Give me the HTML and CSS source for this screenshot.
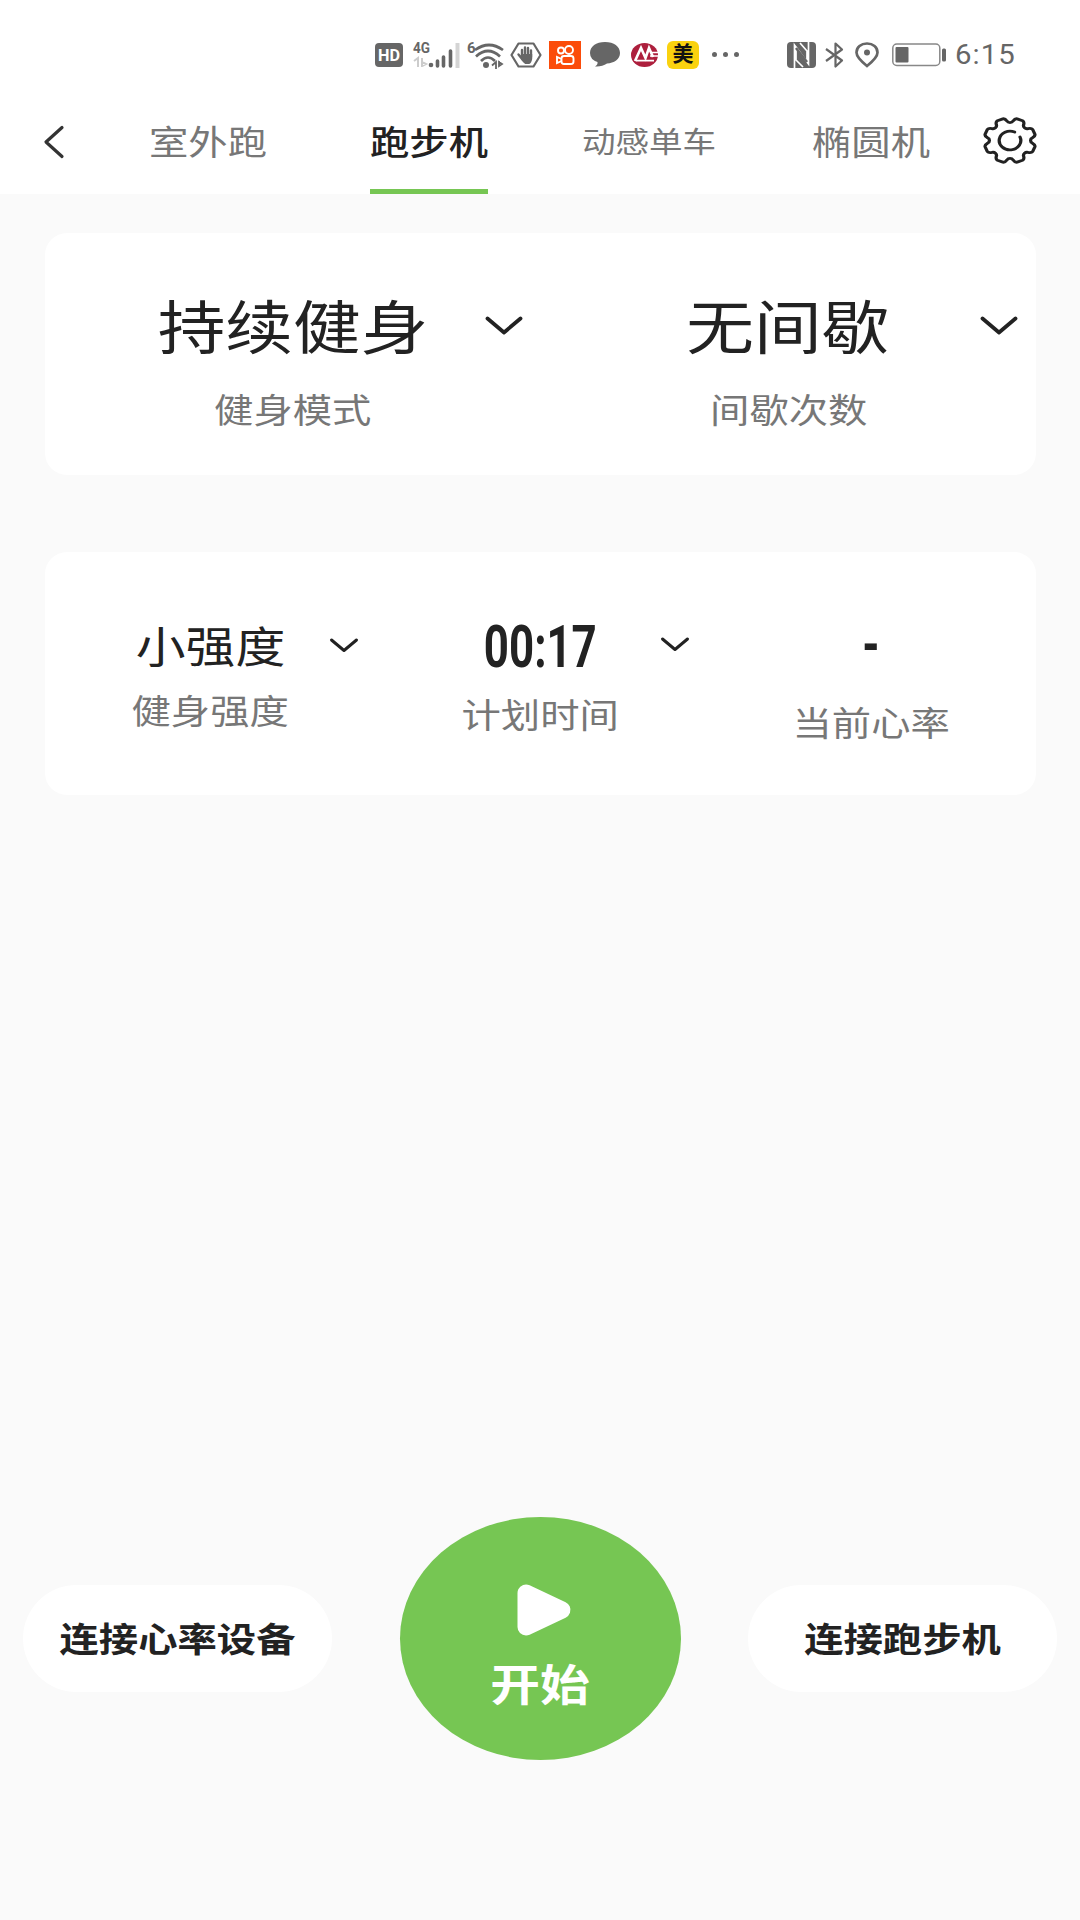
FILE: index.html
```html
<!DOCTYPE html>
<html lang="zh-CN">
<head>
    <meta charset="UTF-8">
    <title>跑步机</title>
    <link rel="stylesheet" href="styles.css">
</head>
<body>
<div class="header">
    <div class="status">
        <svg class="hd" width="28" height="24" viewBox="0 0 28 24">
            <rect width="28" height="24" rx="4" fill="#666"/>
            <text x="3" y="18" font-size="16" font-weight="700" textLength="22" lengthAdjust="spacingAndGlyphs" fill="#fff">HD</text>
        </svg>
        <svg class="signal" width="47" height="28" viewBox="0 0 47 28">
            <text x="0" y="12" font-size="15" font-weight="700" textLength="17" lengthAdjust="spacingAndGlyphs" fill="#666">4G</text>
            <path d="M1 20l4-3v9M9 17v9M9 21l4 2-4 2" fill="none" stroke="#ccc" stroke-width="2"/>
            <circle cx="18" cy="24" r="2.300" fill="#666"/>
            <path d="M24.500 25v-5M30.500 25V16M37.500 25V10" fill="none" stroke="#666" stroke-width="3.600" stroke-linecap="round"/>
            <path d="M44.500 27V2" stroke="#d4d4d4" stroke-width="4"/>
        </svg>
        <svg class="wifi" width="37" height="28" viewBox="0 0 37 28">
            <text x="0" y="12" font-size="15" font-weight="700" fill="#666">6</text>
            <path d="M8 9Q22-1 36 9M9 15.500Q21 4.500 33 15.500M14 20Q21 13 28 20" fill="none" stroke="#666" stroke-width="2.700"/>
            <circle cx="19" cy="24" r="3" fill="#666"/>
            <path d="M25 24.500l4-3.500v7M32 20v6M32 21l3 2-3 2z" fill="none" stroke="#666" stroke-width="1.800"/>
        </svg>
        <svg class="palm" width="32" height="26" viewBox="0 0 32 26">
            <path d="M8.500 1.500h15L30.500 13l-7 11.500h-15L1.500 13z" fill="none" stroke="#666" stroke-width="2.200" stroke-linejoin="round"/>
            <path d="M12 15V8M15 14V5.500M18 14V6M21 15V8.500M8.500 12.500l4 5" stroke="#666" stroke-width="2.400" stroke-linecap="round"/>
            <path d="M11 12h11.200v5q-1 4.500-3 5h-4q-2.500-1.500-4.200-5z" fill="#666"/>
        </svg>
        <svg class="kuai" width="32" height="28" viewBox="0 0 32 28">
            <rect width="32" height="28" fill="#fb4c0a"/>
            <g fill="none" stroke="#fff" stroke-width="1.900">
                <circle cx="12" cy="9.500" r="3"/>
                <circle cx="20" cy="9" r="4"/>
                <rect x="12.500" y="15" width="12" height="8" rx="2.500"/>
                <path d="M12.500 18L8 16v6l4.500-2"/>
            </g>
        </svg>
        <svg class="bubble" width="30" height="25" viewBox="0 0 30 25">
            <path d="M15 0C24 0 30 4.500 30 11s-6 10-13 10.500Q12 25 5 24.500 8 22.500 7.500 20 0 17.500 0 11C0 4.500 6 0 15 0z" fill="#666"/>
        </svg>
        <svg class="bank" width="27" height="24" viewBox="0 0 27 24">
            <ellipse cx="13.500" cy="12" rx="13.500" ry="12" fill="#ad1f3d"/>
            <path d="M4 18L10 5l4.500 10L18 5l4 9" fill="none" stroke="#fff" stroke-width="2.600"/>
            <path d="M5 17.700h18M19 13h8M20 9.500h7" stroke="#fff" stroke-width="1.700"/>
        </svg>
        <span class="mei">美</span>
        <span class="dots"><i></i><i></i><i></i></span>
        <svg class="nfc" width="29" height="26" viewBox="0 0 29 26">
            <rect width="29" height="26" rx="4" fill="#666"/>
            <path d="M7.500 26V3L20 20V9L13 1M9 5v13l7 7M21.500 0v22L9 5" fill="none" stroke="#fff" stroke-width="1.700"/>
            <path d="M9 6l11 14" stroke="#666" stroke-width="2.500"/>
        </svg>
        <svg class="bt" width="19" height="26" viewBox="0 0 19 26">
            <path d="M1 7l16 11.500-6.500 6v-23l6.500 6L1 19" fill="none" stroke="#666" stroke-width="2.200" stroke-linejoin="round"/>
        </svg>
        <svg class="pin" width="24" height="26" viewBox="0 0 24 26">
            <path d="M12 24Q1.500 15.500 1.500 10.500C1.500 5 6 1.500 12 1.500S22.500 5 22.500 10.500Q22.500 15.500 12 24z" fill="none" stroke="#666" stroke-width="2.700"/>
            <circle cx="12" cy="10.500" r="3" fill="#666"/>
        </svg>
        <svg class="battery" width="54" height="24" viewBox="0 0 54 24">
            <rect x=".8" y="1" width="47" height="21.500" rx="4" fill="#fff" stroke="#888" stroke-width="1.500"/>
            <rect x="3.500" y="4" width="13" height="15.500" rx="1" fill="#666"/>
            <rect x="50" y="5.500" width="4" height="13" rx="1.500" fill="#666"/>
        </svg>
        <span class="time">6:15</span>
    </div>

    <div class="nav">
        <a href="#" class="back">
            <svg width="22" height="34" viewBox="0 0 22 34">
                <path d="M19 2.500L3 17l16 14.500" fill="none" stroke="#333" stroke-width="3.200" stroke-linecap="round" stroke-linejoin="round"/>
            </svg>
        </a>
        <ul class="tabs">
            <li class="tab"><span>室外跑</span></li>
            <li class="tab on"><span>跑步机</span></li>
            <li class="tab small"><span>动感单车</span></li>
            <li class="tab"><span>椭圆机</span></li>
        </ul>
        <a href="#" class="setting">
            <svg width="54" height="47" viewBox="-50 -50 100 100" preserveAspectRatio="none">
                <g fill="none" stroke="#222" stroke-width="6" stroke-linecap="round" stroke-linejoin="round">
                    <path d="M5.800-41.600Q9.200-47.100 13.200-46.100L23.300-42Q26.800-39.800 25.300-33.500A6.500 6.500 0 0 0 33.500-25.300Q39.800-26.800 42-23.300L46.100-13.200Q47.100-9.200 41.600-5.800A6.500 6.500 0 0 0 41.600 5.800Q47.100 9.200 46.100 13.200L42 23.300Q39.800 26.800 33.500 25.300A6.500 6.500 0 0 0 25.300 33.500Q26.800 39.800 23.300 42L13.200 46.100Q9.200 47.100 5.800 41.600A6.500 6.500 0 0 0-5.800 41.600Q-9.200 47.100-13.200 46.100L-23.300 42Q-26.800 39.800-25.300 33.500A6.500 6.500 0 0 0-33.500 25.300Q-39.800 26.800-42 23.300L-46.100 13.200Q-47.100 9.200-41.600 5.800A6.500 6.500 0 0 0-41.600-5.800Q-47.100-9.200-46.100-13.200L-42-23.300Q-39.800-26.800-33.500-25.300A6.500 6.500 0 0 0-25.300-33.500Q-26.800-39.800-23.300-42L-13.200-46.100Q-9.200-47.100-5.800-41.600A6.500 6.500 0 0 0 5.800-41.600z"/>
                    <path d="M18.500-7.500A20 20 0 1 1 8.500-18"/>
                </g>
            </svg>
        </a>
    </div>
</div>

<div class="card">
    <div class="cell">
        <div class="value big"><span>持续健身</span></div>
        <svg class="arrow" width="38" height="20" viewBox="0 0 38 20"><path d="M2.500 2.500l16.500 14 16.500-14"/></svg>
        <div class="label"><span>健身模式</span></div>
    </div>
    <div class="cell">
        <div class="value big"><span>无间歇</span></div>
        <svg class="arrow" width="38" height="20" viewBox="0 0 38 20"><path d="M2.500 2.500l16.500 14 16.500-14"/></svg>
        <div class="label"><span>间歇次数</span></div>
    </div>
</div>

<div class="card second">
    <div class="cell level">
        <div class="value"><span>小强度</span></div>
        <svg class="arrow" width="28" height="15" viewBox="0 0 28 15"><path d="M1.500 2L14 12.500 26.500 2"/></svg>
        <div class="label"><span>健身强度</span></div>
    </div>
    <div class="cell plan">
        <div class="value num"><span>00:17</span></div>
        <svg class="arrow" width="28" height="15" viewBox="0 0 28 15"><path d="M1.500 2L14 12.500 26.500 2"/></svg>
        <div class="label"><span>计划时间</span></div>
    </div>
    <div class="cell heart">
        <div class="value num"><span>-</span></div>
        <div class="label"><span>当前心率</span></div>
    </div>
</div>

<div class="footer">
    <a href="#" class="connect"><span>连接心率设备</span></a>
    <a href="#" class="start">
        <svg width="54" height="52" viewBox="0 0 54 52">
            <path d="M9 9v34L45 26z" fill="#fff" stroke="#fff" stroke-width="17" stroke-linejoin="round"/>
        </svg>
        <span>开始</span>
    </a>
    <a href="#" class="connect"><span>连接跑步机</span></a>
</div>
</body>
</html>
```
FILE: styles.css
```css
*{
    margin: 0;
    padding: 0;
    box-sizing: border-box;
}
html,body{
    width: 100%;
    height: 100%;
}
body{
    display: flex;
    flex-direction: column;
    overflow: hidden;
    background-color: #fafafa;
    color: #222;
    font-family: Roboto,"Noto Sans CJK SC",sans-serif;
}
a{
    color: inherit;
    text-decoration: none;
}
ul{
    list-style: none;
}
svg{
    display: block;
    flex: none;
    overflow: visible;
}

/*顶部*/
.header{
    height: 194px;
    background-color: #fff;
}
.status{
    display: flex;
    align-items: center;
    height: 88px;
    padding: 21px 0 0 375px;
    color: #666;
}
.signal{
    margin-left: 10px;
}
.wifi{
    margin-left: 7px;
}
.palm{
    margin-left: 6px;
}
.kuai{
    margin-left: 7px;
}
.bubble{
    margin-left: 9px;
}
.bank{
    margin-left: 11px;
}
.mei{
    width: 32px;
    height: 28px;
    margin-left: 9px;
    border-radius: 6px;
    background-color: #fad20f;
    color: #111;
    font-size: 21px;
    font-weight: 700;
    line-height: 27px;
    text-align: center;
}
.dots{
    display: flex;
    gap: 6px;
    margin-left: 13px;
}
.dots i{
    width: 5px;
    height: 5px;
    border-radius: 50%;
    background-color: #666;
}
.nfc{
    margin-left: 48px;
}
.bt{
    margin-left: 9px;
}
.pin{
    margin-left: 11px;
}
.battery{
    margin-left: 13px;
}
.time{
    margin-left: 9px;
    font-size: 28.500px;
    line-height: 32px;
    letter-spacing: 1px;
    transform: scaleX(1.03);
    transform-origin: left;
}
.nav{
    display: flex;
    height: 106px;
}
.back{
    width: 97px;
    padding: 37px 0 0 43px;
}
.tabs{
    display: flex;
    width: 884px;
}
.tab{
    display: flex;
    flex: 1;
    justify-content: center;
    color: #777;
    font-size: 34px;
    line-height: 110px;
}
.tab span{
    height: 106px;
    transform: scaleX(1.157);
}
.small{
    font-size: 29px;
}
.on{
    color: #222;
    font-weight: 500;
}
.on span{
    border-bottom: 5px solid #76c653;
}
.setting{
    padding: 29px 0 0 2px;
}

/*卡片*/
.card{
    display: flex;
    flex: none;
    width: 991px;
    height: 242px;
    margin: 39px 0 0 45px;
    border-radius: 22px;
    background-color: #fff;
}
.second{
    height: 243px;
    margin-top: 77px;
}
.cell{
    display: grid;
    flex: 1;
    grid-template-columns: 1fr auto 1fr;
    grid-template-rows: 80px 40px;
    row-gap: 22px;
    align-content: start;
    align-items: center;
    padding-top: 56px;
}
.value{
    grid-column: 2;
    font-size: 43px;
    line-height: 60px;
    text-align: center;
}
.big{
    font-size: 58.500px;
    line-height: 80px;
}
.value span,.label span,.connect span,.start span{
    display: block;
    transform: scaleX(1.157);
}
.arrow{
    justify-self: end;
    margin: -6px 18px 0 0;
    fill: none;
    stroke: #222;
    stroke-width: 3.800;
    stroke-linecap: round;
    stroke-linejoin: round;
}
.label{
    grid-row: 2;
    grid-column: 1 / 4;
    color: #777;
    font-size: 34px;
    line-height: 40px;
    text-align: center;
}
.second .cell{
    grid-template-rows: 60px 40px;
    row-gap: 14px;
    padding-top: 66px;
}
.second .arrow{
    stroke-width: 3;
    margin: -5px 17px 0 0;
}
.second .plan{
    row-gap: 19px;
    padding-top: 65px;
}
.second .heart{
    row-gap: 29px;
    padding-top: 63px;
}
.num{
    font-size: 60px;
    font-weight: 700;
}
.value.num span{
    transform: scaleX(.73);
    margin: 0 -20px;
}

/*底部按钮*/
.footer{
    display: flex;
    align-items: center;
    justify-content: space-between;
    height: 243px;
    margin-top: 722px;
    padding: 0 23px 0 23px;
}
.connect{
    width: 309px;
    height: 107px;
    border-radius: 54px;
    background-color: #fff;
    font-size: 34px;
    font-weight: 700;
    line-height: 111px;
    text-align: center;
}
.start{
    display: flex;
    flex-direction: column;
    align-items: center;
    width: 281px;
    height: 243px;
    padding-top: 67px;
    border-radius: 50%;
    background-color: #76c653;
    color: #fff;
    font-size: 43px;
    font-weight: 700;
    line-height: 60px;
}
.start svg{
    margin-left: 8px;
}
.start span{
    margin-top: 20px;
}
```
